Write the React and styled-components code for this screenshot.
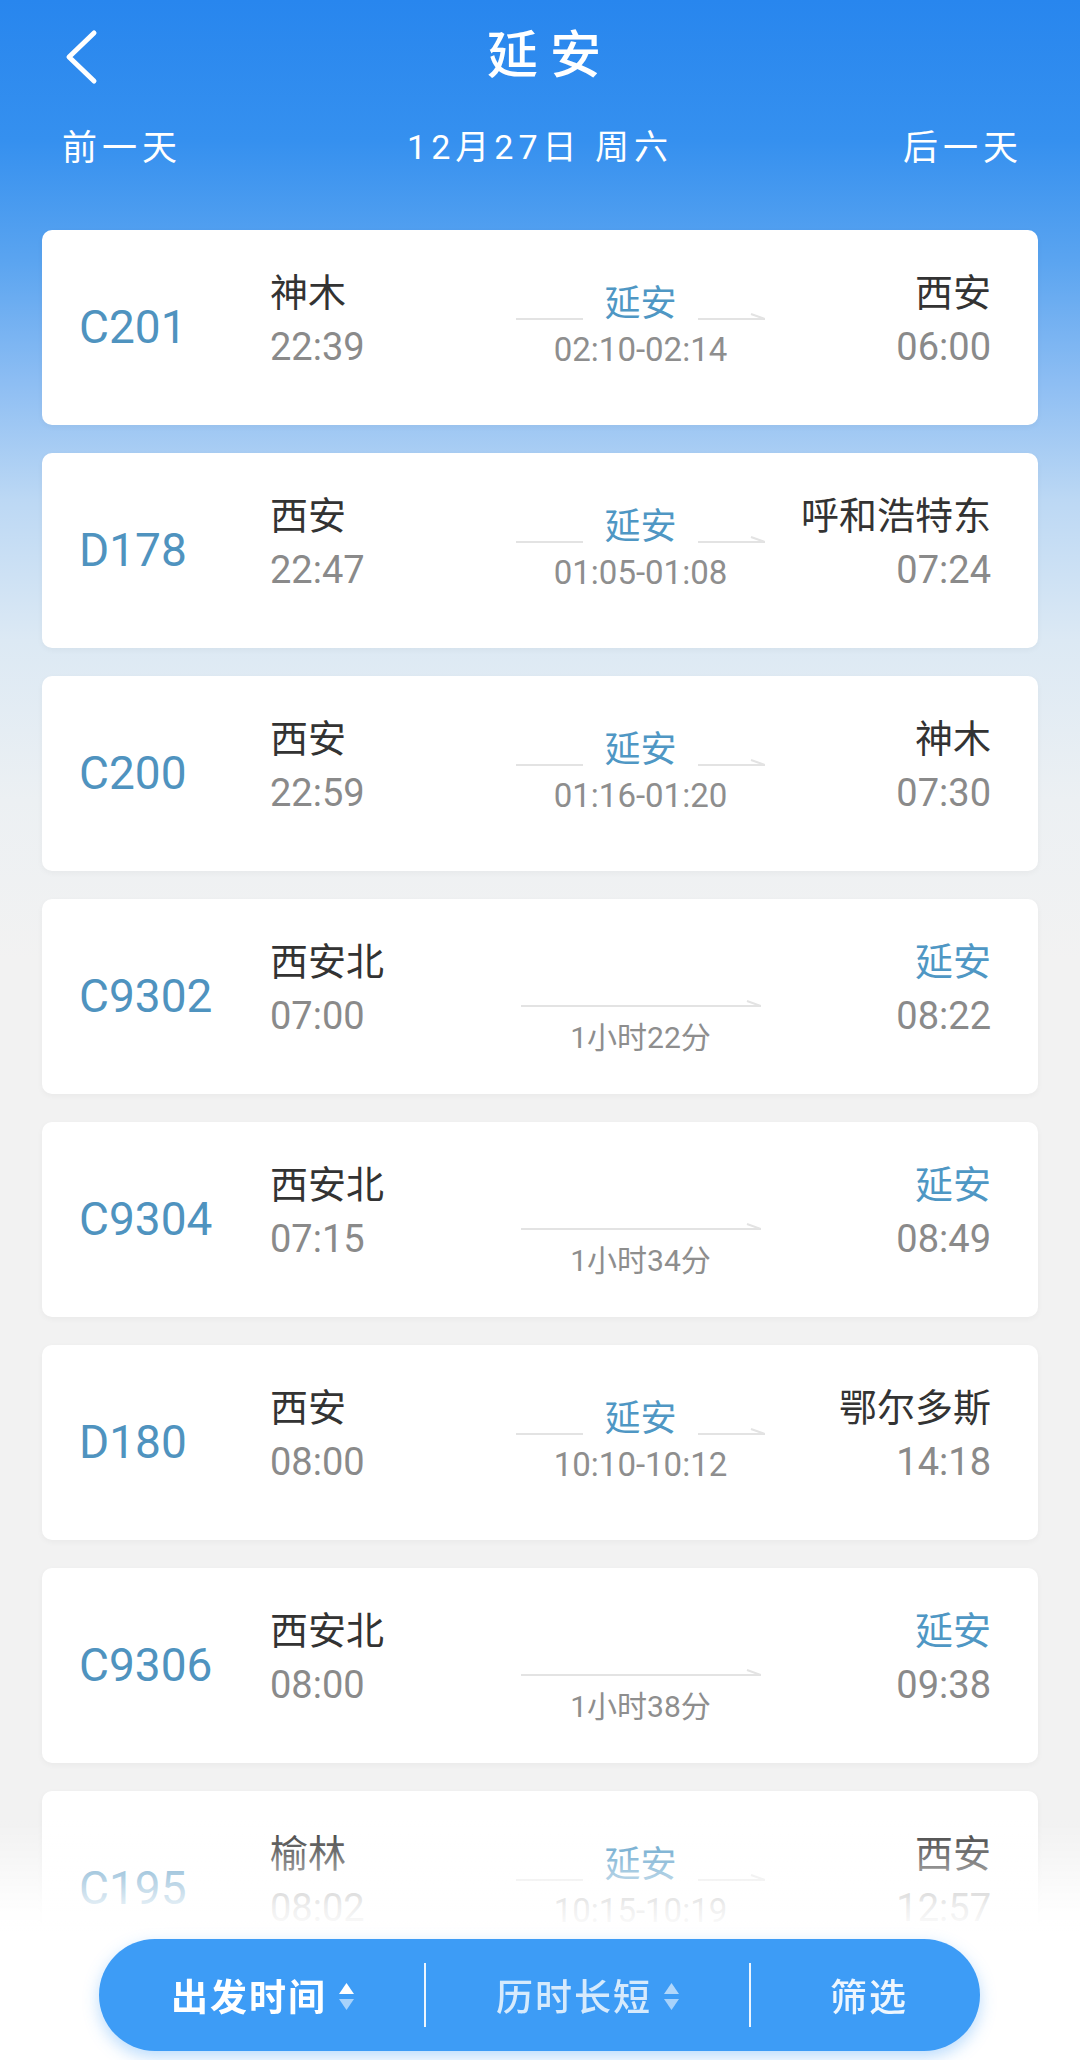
import React from 'react';
import styled, {createGlobalStyle} from 'styled-components';

const trains = [
  {no: 'C201', from: '神木', dep: '22:39', stop: '02:10-02:14', to: '西安', arr: '06:00'},
  {no: 'D178', from: '西安', dep: '22:47', stop: '01:05-01:08', to: '呼和浩特东', arr: '07:24'},
  {no: 'C200', from: '西安', dep: '22:59', stop: '01:16-01:20', to: '神木', arr: '07:30'},
  {no: 'C9302', from: '西安北', dep: '07:00', duration: '1小时22分', to: '延安', arr: '08:22'},
  {no: 'C9304', from: '西安北', dep: '07:15', duration: '1小时34分', to: '延安', arr: '08:49'},
  {no: 'D180', from: '西安', dep: '08:00', stop: '10:10-10:12', to: '鄂尔多斯', arr: '14:18'},
  {no: 'C9306', from: '西安北', dep: '08:00', duration: '1小时38分', to: '延安', arr: '09:38'},
  {no: 'C195', from: '榆林', dep: '08:02', stop: '10:15-10:19', to: '西安', arr: '12:57'},
];

// thin grey rail, optional half arrow head at the right end
const Rail = ({width, arrow}) => (
  <svg width={width} height="10" viewBox={`0 0 ${width} 10`}>
    <line x1="0" y1="8" x2={width} y2="8" stroke="#e3e3e3" strokeWidth="2" />
    {arrow && <line x1={width - 14} y1="3" x2={width} y2="8" stroke="#e3e3e3" strokeWidth="2" />}
  </svg>
);

const SortIcon = ({active}) => (
  <SortWrap>
    <svg width="15" height="28" viewBox="0 0 15 28">
      <polygon points="7.5,0 15,11 0,11" fill={active ? '#ffffff' : 'rgba(255,255,255,0.6)'} />
      <polygon points="0,16 15,16 7.5,27" fill="rgba(255,255,255,0.55)" />
    </svg>
  </SortWrap>
);

const TrainCard = ({train}) => {
  const isStop = !!train.stop;
  return (
    <Card>
      <TrainNo>{train.no}</TrainNo>
      <Station>
        <StationName>{train.from}</StationName>
        <Time>{train.dep}</Time>
      </Station>
      {isStop ? (
        <Middle $transit>
          <StopRow>
            <Rail width={67} />
            <StopName>延安</StopName>
            <Rail width={67} arrow />
          </StopRow>
          <StopTime>{train.stop}</StopTime>
        </Middle>
      ) : (
        <Middle>
          <Rail width={240} arrow />
          <Duration>{train.duration}</Duration>
        </Middle>
      )}
      <Station $right>
        <StationName $highlight={train.to === '延安'}>{train.to}</StationName>
        <Time>{train.arr}</Time>
      </Station>
    </Card>
  );
};

const App = () => {
  return (
    <Page>
      <GlobalStyle />
      <TitleBar>
        <BackBtn>
          <svg width="34" height="56" viewBox="0 0 34 56">
            <polyline points="30,4 5,28 30,52" fill="none" stroke="#ffffff" strokeWidth="5" strokeLinecap="round" strokeLinejoin="round" />
          </svg>
        </BackBtn>
        <Title>延安</Title>
        <div />
      </TitleBar>
      <DateRow>
        <DayLink>前一天</DayLink>
        <DateText>12月27日 周六</DateText>
        <DayLink>后一天</DayLink>
      </DateRow>
      <List>
        {trains.map((t) => (
          <TrainCard key={t.no} train={t} />
        ))}
      </List>
      <Fade />
      <BottomBar>
        <BarItem $active>
          出发时间
          <SortIcon active />
        </BarItem>
        <Divider />
        <BarItem>
          历时长短
          <SortIcon />
        </BarItem>
        <Divider />
        <BarItem $filter>筛选</BarItem>
      </BottomBar>
    </Page>
  );
};

export default App;

const GlobalStyle = createGlobalStyle`
  html, body {
    margin: 0;
    padding: 0;
    background: #f2f2f2;
  }
  body {
    font-family: Roboto, "Noto Sans CJK SC", sans-serif;
    overflow: hidden;
  }
  #root {
    height: 2060px;
    overflow: hidden;
  }
`;

const Page = styled.div`
  height: 2060px;
  overflow: hidden;
  background: linear-gradient(
    180deg,
    #2886ee 0px,
    #3590ef 140px,
    #5aa4f0 260px,
    #8cbdf3 380px,
    #bcd8f4 500px,
    #dce9f4 640px,
    #ecf0f3 800px,
    #f2f2f2 960px
  );
`;

const TitleBar = styled.div`
  height: 112px;
  display: grid;
  grid-template-columns: 1fr auto 1fr;
  align-items: center;
`;

const BackBtn = styled.div`
  padding-left: 64px;
  display: flex;
  align-items: center;
  padding-top: 2px;
`;

const Title = styled.div`
  color: #ffffff;
  font-size: 51px;
  font-weight: 500;
  letter-spacing: 12px;
  margin-right: -12px;
  padding-left: 8px;
  line-height: 112px;
`;

const DateRow = styled.div`
  height: 64px;
  display: flex;
  justify-content: space-between;
  align-items: center;
  padding: 0 62px 0 62px;
`;

const DayLink = styled.div`
  color: #ffffff;
  font-size: 35px;
  letter-spacing: 5px;
  margin-right: -5px;
`;

const DateText = styled.div`
  color: #ffffff;
  font-size: 34px;
  letter-spacing: 5px;
`;

const List = styled.div`
  margin-top: 54px;
  padding: 0 42px;
  display: flex;
  flex-direction: column;
  gap: 28px;
`;

const Card = styled.div`
  height: 195px;
  box-sizing: border-box;
  background: #ffffff;
  border-radius: 10px;
  box-shadow: 0 2px 6px rgba(0, 0, 0, 0.04);
  display: grid;
  grid-template-columns: 191px 210px 1fr 190px;
  padding: 0 47px 0 37px;
`;

const TrainNo = styled.div`
  align-self: center;
  color: #4f93bf;
  font-size: 46px;
  padding-bottom: 2px;
`;

const Station = styled.div`
  padding-top: 39px;
  display: flex;
  flex-direction: column;
  align-items: ${(p) => (p.$right ? 'flex-end' : 'flex-start')};
`;

const StationName = styled.div`
  font-size: 38px;
  line-height: 48px;
  margin-bottom: 8px;
  color: ${(p) => (p.$highlight ? '#4f97c4' : '#333333')};
  white-space: nowrap;
`;

const Time = styled.div`
  font-size: 38px;
  line-height: 44px;
  color: #8a8a8a;
`;

const Middle = styled.div`
  padding-top: ${(p) => (p.$transit ? '52px' : '99px')};
  display: flex;
  flex-direction: column;
  align-items: center;
`;

const StopRow = styled.div`
  display: flex;
  align-items: flex-end;
  gap: 21px;
  svg {
    margin-bottom: 5px;
    flex-shrink: 0;
  }
`;

const StopName = styled.div`
  font-size: 36px;
  line-height: 44px;
  color: #4f97c4;
`;

const StopTime = styled.div`
  margin-top: 4px;
  font-size: 33px;
  line-height: 40px;
  color: #8e8e8e;
`;

const Duration = styled.div`
  margin-top: 10px;
  font-size: 30px;
  line-height: 40px;
  color: #8e8e8e;
`;

const Fade = styled.div`
  position: fixed;
  left: 0;
  right: 0;
  bottom: 0;
  height: 300px;
  pointer-events: none;
  background: linear-gradient(
    180deg,
    rgba(255, 255, 255, 0) 60px,
    rgba(255, 255, 255, 0.3) 92px,
    rgba(255, 255, 255, 0.85) 146px,
    #ffffff 172px
  );
`;

const BottomBar = styled.div`
  position: fixed;
  left: 99px;
  width: 881px;
  top: 1939px;
  height: 112px;
  box-sizing: border-box;
  border-radius: 56px;
  background: #3d9cf6;
  box-shadow: 0 6px 16px rgba(61, 156, 246, 0.35);
  display: flex;
  align-items: center;
  gap: 70px;
  padding-left: 72px;
`;

const BarItem = styled.div`
  display: flex;
  align-items: center;
  gap: 12px;
  font-size: 37px;
  letter-spacing: 2px;
  font-weight: ${(p) => (p.$active ? 700 : 500)};
  color: ${(p) => (p.$active ? '#ffffff' : p.$filter ? '#eef6fe' : '#d6eafc')};
  margin-left: ${(p) => (p.$filter ? '9px' : '0')};
`;

const SortWrap = styled.span`
  display: inline-flex;
  padding-top: 4px;
`;

const Divider = styled.div`
  width: 2px;
  height: 64px;
  background: rgba(255, 255, 255, 0.9);
`;
